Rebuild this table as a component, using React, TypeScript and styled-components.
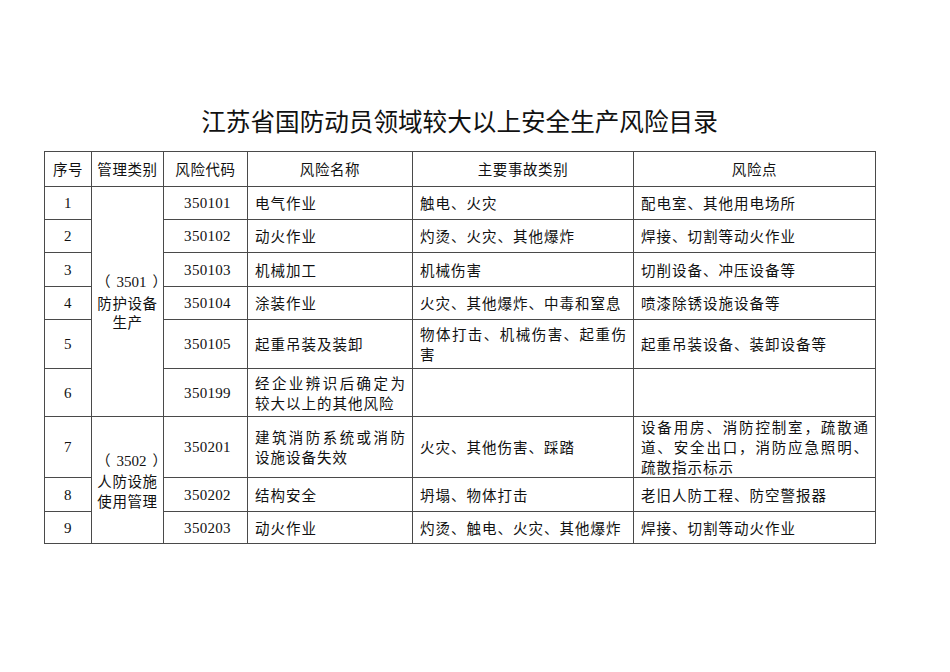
import React from 'react';
import styled, {createGlobalStyle} from 'styled-components';

const GlobalStyle = createGlobalStyle`
	html, body {
		margin: 0;
		padding: 0;
		background: #ffffff;
	}
	body {
		font-family: 'Liberation Serif', 'Noto Sans CJK SC', serif;
		color: #111111;
	}
`;

type Row = {
	no: number;
	code: string;
	name: string;
	accident: string;
	point: string;
	h: number;
};

const group1: Row[] = [
	{no: 1, code: '350101', name: '电气作业', accident: '触电、火灾', point: '配电室、其他用电场所', h: 33},
	{no: 2, code: '350102', name: '动火作业', accident: '灼烫、火灾、其他爆炸', point: '焊接、切割等动火作业', h: 33},
	{no: 3, code: '350103', name: '机械加工', accident: '机械伤害', point: '切削设备、冲压设备等', h: 34},
	{no: 4, code: '350104', name: '涂装作业', accident: '火灾、其他爆炸、中毒和窒息', point: '喷漆除锈设施设备等', h: 33},
	{no: 5, code: '350105', name: '起重吊装及装卸', accident: '物体打击、机械伤害、起重伤害', point: '起重吊装设备、装卸设备等', h: 49},
	{no: 6, code: '350199', name: '经企业辨识后确定为较大以上的其他风险', accident: '', point: '', h: 48},
];

const group2: Row[] = [
	{no: 7, code: '350201', name: '建筑消防系统或消防设施设备失效', accident: '火灾、其他伤害、踩踏', point: '设备用房、消防控制室，疏散通道、安全出口，消防应急照明、疏散指示标示', h: 61},
	{no: 8, code: '350202', name: '结构安全', accident: '坍塌、物体打击', point: '老旧人防工程、防空警报器', h: 34},
	{no: 9, code: '350203', name: '动火作业', accident: '灼烫、触电、火灾、其他爆炸', point: '焊接、切割等动火作业', h: 32},
];

const groups = [
	{code: '3501', label: ['防护设备', '生产'], rows: group1},
	{code: '3502', label: ['人防设施', '使用管理'], rows: group2},
];

export default function App() {
	return (
		<>
			<GlobalStyle />
			<Page>
				<Title>江苏省国防动员领域较大以上安全生产风险目录</Title>
				<Table>
					<colgroup>
						<col style={{width: 47}} />
						<col style={{width: 72}} />
						<col style={{width: 84}} />
						<col style={{width: 165}} />
						<col style={{width: 221}} />
						<col style={{width: 242}} />
					</colgroup>
					<thead>
						<TRow $h={35}>
							<Head>序号</Head>
							<Head>管理类别</Head>
							<Head>风险代码</Head>
							<Head>风险名称</Head>
							<Head>主要事故类别</Head>
							<Head>风险点</Head>
						</TRow>
					</thead>
					<tbody>
						{groups.map((g) =>
							g.rows.map((r, i) => (
								<TRow key={r.no} $h={r.h}>
									<Center>{r.no}</Center>
									{i === 0 && (
										<GroupCell rowSpan={g.rows.length}>
											<CodeLine>
												<Paren $side='open'>（</Paren>
												{g.code}
												<Paren $side='close'>）</Paren>
											</CodeLine>
											{g.label.map((l) => (
												<div key={l}>{l}</div>
											))}
										</GroupCell>
									)}
									<Center $shift={4}>{r.code}</Center>
									<Text>{r.name}</Text>
									<Text>{r.accident}</Text>
									<Text>{r.point}</Text>
								</TRow>
							))
						)}
					</tbody>
				</Table>
			</Page>
		</>
	);
}

const Page = styled.div`
	width: 831px;
	padding: 101px 0 0 44px;
	display: flex;
	flex-direction: column;
`;

const Title = styled.div`
	margin: 0 0 12px 0;
	font-family: 'Noto Sans CJK SC', sans-serif;
	font-weight: 400;
	font-size: 24.6px;
	line-height: 38px;
	text-align: center;
	color: #111111;
`;

const Table = styled.table`
	border-collapse: collapse;
	table-layout: fixed;
	width: 831px;
	font-size: 15px;
	line-height: 20px;
`;

const TRow = styled.tr<{$h: number}>`
	height: ${(p) => p.$h}px;
`;

const Head = styled.th`
	border: 1px solid #4a4a4a;
	font-weight: 400;
	padding: 0 2px;
	text-align: center;
	vertical-align: middle;
	font-family: 'Noto Sans CJK SC', sans-serif;
	font-size: 14.5px;
	letter-spacing: 0.6px;
`;

const Center = styled.td<{$shift?: number}>`
	border: 1px solid #4a4a4a;
	padding: 0 2px 0 ${(p) => 2 + (p.$shift ?? 0)}px;
	text-align: center;
	vertical-align: middle;
	letter-spacing: 0.3px;
`;

const GroupCell = styled(Center)`
	line-height: 19.5px;
	padding: 0 4px;
	font-family: 'Noto Sans CJK SC', sans-serif;
	font-size: 14.5px;
	letter-spacing: 0.6px;
`;

const CodeLine = styled.div`
	font-family: 'Liberation Serif', serif;
	font-size: 15px;
	letter-spacing: 0;
`;

const Paren = styled.span<{$side: 'open' | 'close'}>`
	font-family: 'Noto Sans CJK SC', sans-serif;
	font-size: 14.5px;
	${(p) => (p.$side === 'open' ? 'margin-right: 6px;' : 'margin-left: 6px;')}
`;

const Text = styled.td`
	border: 1px solid #4a4a4a;
	padding: 0 6px 0 7px;
	text-align: justify;
	vertical-align: middle;
	font-family: 'Noto Sans CJK SC', sans-serif;
	font-size: 14.5px;
	letter-spacing: 1px;
	word-break: break-all;
`;
